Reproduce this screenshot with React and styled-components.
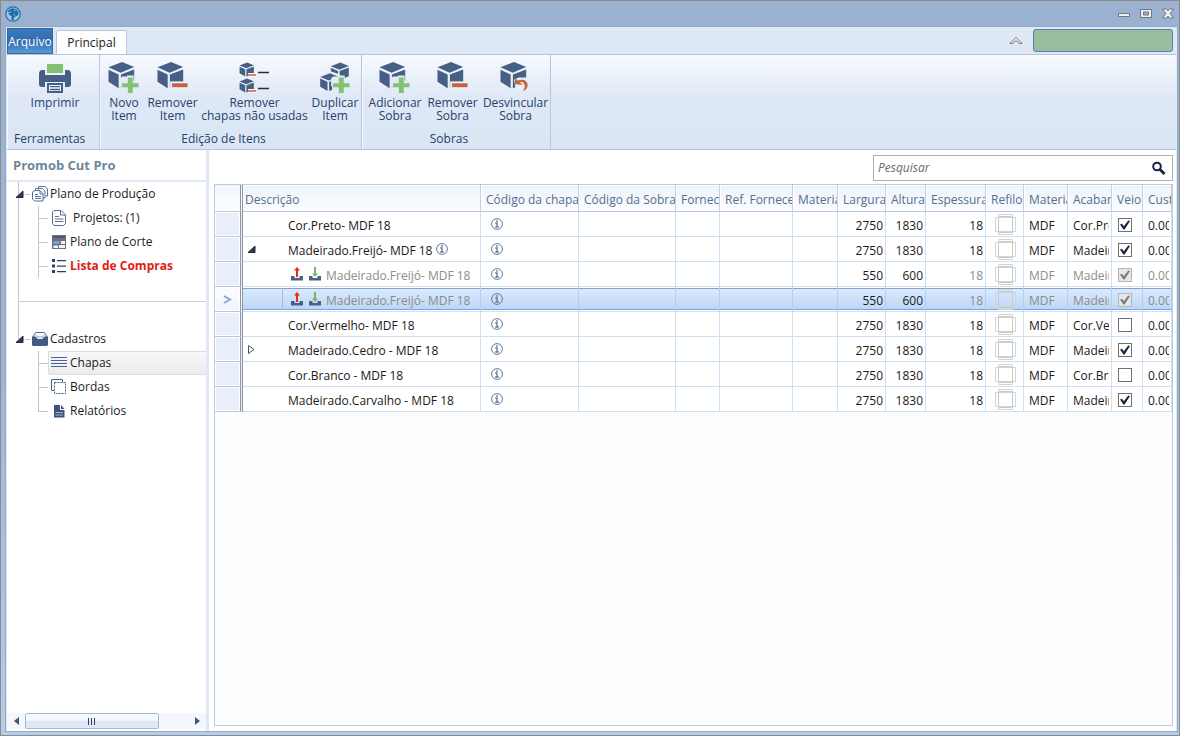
import React, { useState } from "react"
import styled, { createGlobalStyle, css } from "styled-components"

const GlobalStyle = createGlobalStyle`
* {
  box-sizing: border-box;
}
html, body, #root {
  height: 100%;
}
body {
  margin: 0;
  font-family: "Open Sans", "Noto Sans", sans-serif;
  font-size: 12px;
  line-height: 16px;
  color: #1a1a1a;
}
button, input {
  font: inherit;
  color: inherit;
}
button {
  border: 0;
  padding: 0;
  background: none;
}
ul {
  list-style: none;
  margin: 0;
  padding: 0;
}
svg {
  display: block;
  flex: none;
}
`

const Window = styled.div`
display: flex;
flex-direction: column;
height: 100vh;
border: 1px solid #8b8b8b;
padding: 0 1px 3px 4px;
background: linear-gradient(#9ab2d0, #9bb6d6 50%, #b3cdeb);
`
const TitleBar = styled.header`
display: flex;
align-items: center;
justify-content: space-between;
height: 25px;
flex: none;
`
const WindowButtons = styled.div`
display: flex;
gap: 6px;
padding-right: 2px;
`
const WindowButton = styled.button`
width: 16px;
height: 16px;
`
const Client = styled.div`
display: flex;
flex-direction: column;
flex: 1;
min-height: 0;
border: 1px solid #93a9c6;
background: #dfe8f5;
padding: 0 1px;
`

const TabBar = styled.nav`
display: flex;
align-items: flex-end;
height: 27px;
flex: none;
`
const FileTab = styled.button`
width: 46px;
height: 26px;
padding-top: 2px;
color: white;
border: 1px solid #2c68a9;
background: linear-gradient(#3d7ab8, #2f6cb0 50%, #5b9bd3);
white-space: nowrap;
display: flex;
align-items: center;
justify-content: center;
`
const Tab = styled.button`
width: 71px;
height: 24px;
margin-left: 3px;
border: 1px solid #b7c8de;
border-bottom: 0;
border-radius: 2px 2px 0 0;
background: #fdfeff;
`
const Collapse = styled.button`
margin: 0 10px 9px auto;
`
const Account = styled.button`
width: 140px;
height: 23px;
margin: 0 3px 2px 0;
border: 1px solid #4f83b4;
border-radius: 3px;
background: #99bd9d;
`

const Ribbon = styled.div`
display: flex;
height: 96px;
flex: none;
border-top: 1px solid #b4c5dc;
border-bottom: 1px solid #b4c5dc;
background: linear-gradient(#f7faff, #dfe8f6 45%, #dae6f4);
color: #27426b;
`
const Group = styled.section`
display: flex;
flex-direction: column;
justify-content: space-between;
width: ${p => p.$width}px;
padding: 6px ${p => p.$pad}px 2px;
border-right: 1px solid #b9c7dc;
box-shadow: inset 1px 0 #f5f9ff;
`
const Commands = styled.div`
display: flex;
gap: 9px;
`
const GroupName = styled.h2`
margin: 0;
padding-right: 14px;
font-size: 12px;
font-weight: 400;
text-align: ${p => p.$align || "center"};
`
const Command = styled.button`
display: flex;
flex-direction: column;
flex: none;
align-items: center;
width: ${p => p.$width}px;
line-height: 13px;
white-space: pre;
svg {
  margin-bottom: 3px;
}
`

const Body = styled.div`
display: flex;
flex: 1;
min-height: 0;
background: white;
`
const Sidebar = styled.aside`
display: flex;
flex-direction: column;
width: 202px;
flex: none;
border-right: 3px solid #dfe8f6;
`
const SidebarTitle = styled.h1`
margin: 0;
height: 32px;
flex: none;
padding: 6px;
border-bottom: 2px solid #dfe8f6;
font-size: 13px;
line-height: 18px;
color: #6f8699;
`
const Tree = styled.div`
flex: 1;
position: relative;
color: #1c1c1c;
&::before {
  content: "";
  position: absolute;
  left: 11px;
  top: 0;
  height: 157px;
  border-left: 1px solid #c6c6c6;
}
`
const Branch = styled.div`
position: relative;
`
const BranchHeader = styled.div`
display: flex;
align-items: center;
height: 24px;
padding-left: 8px;
`
const Toggle = styled.button`
width: 10px;
height: 10px;
`
const Dash = styled.span`
width: 5px;
height: 1px;
margin-right: 2px;
background: #c6c6c6;
`
const BranchLabel = styled.span`
display: flex;
align-items: center;
gap: 2px;
white-space: nowrap;
`
const Separator = styled.hr`
margin: 23px 0 25px 11px;
border: 0;
border-top: 1px solid #cfcfcf;
`
const Leaves = styled.ul`
position: relative;
margin-left: 31px;
&::before {
  content: "";
  position: absolute;
  left: 0;
  top: 0;
  bottom: ${p => p.$open ? 0 : 12}px;
  border-left: 1px solid #c6c6c6;
}
`
const Leaf = styled.li`
display: flex;
align-items: center;
height: 24px;
&::before {
  content: "";
  width: 10px;
  border-top: 1px solid #c6c6c6;
}
`
const LeafLink = styled.a`
display: flex;
align-items: center;
flex: 1;
gap: 3px;
height: 24px;
padding-left: 2px;
border: 1px solid transparent;
border-right: 0;
border-radius: 2px 0 0 2px;
color: inherit;
text-decoration: none;
white-space: pre;
${p => p.$selected && css`
  border-color: #dcdcdc;
  background: linear-gradient(#f8f8f8, #ececec);
`}
${p => p.$alert && css`
  color: #e0200f;
  font-weight: 700;
`}
`
const ScrollBar = styled.div`
display: flex;
align-items: center;
height: 16px;
flex: none;
margin-bottom: 2px;
background: #f4f8fd;
`
const ScrollArrow = styled.button`
width: 18px;
height: 16px;
display: flex;
align-items: center;
justify-content: center;
`
const ScrollThumb = styled.div`
display: flex;
align-items: center;
justify-content: center;
gap: 1px;
width: 134px;
height: 16px;
margin-right: auto;
border: 1px solid #a3b6cf;
border-radius: 2px;
background: linear-gradient(#f5f9fd 45%, #dce7f3 50%, #dfe9f5);
i {
  width: 1px;
  height: 7px;
  background: #2b3f68;
  margin-right: 1px;
}
`

const Main = styled.main`
display: flex;
flex-direction: column;
flex: 1;
min-width: 0;
padding: 5px 3px 5px 5px;
`
const Search = styled.label`
display: flex;
align-items: center;
align-self: flex-end;
width: 300px;
height: 26px;
margin-bottom: 3px;
padding: 0 6px 0 4px;
border: 1px solid #b0b0b0;
background: white;
`
const SearchInput = styled.input`
flex: 1;
min-width: 0;
padding: 0;
border: 0;
outline: 0;
font-style: italic;
&::placeholder {
  color: #6b6b6b;
  opacity: 1;
}
`
const Grid = styled.div`
flex: 1;
min-height: 0;
overflow: hidden;
border: 1px solid #bccbe0;
background: #fcfefd;
`
const Table = styled.table`
width: 100%;
table-layout: fixed;
border-collapse: separate;
border-spacing: 0;
background: white;
`
const HeadCell = styled.th`
height: 27px;
padding: 3px 0 0 ${p => p.$first ? 2 : 5}px;
border-right: 1px solid #c2d0e3;
border-bottom: 1px solid #b7c7dd;
background: linear-gradient(#eef3fb, #fbfdff);
box-shadow: inset 1px 1px white;
color: #566f8c;
font-weight: 400;
text-align: left;
white-space: nowrap;
overflow: hidden;
`
const indicator = css`
padding: 0;
border-right: 3px double #8e959e;
border-bottom: 1px solid #b7c7dd;
`
const HeadIndicator = styled.th`
height: 27px;
background: linear-gradient(#f0f5fc, white);
${indicator}
`
const Indicator = styled.td`
${indicator}
background: ${p => p.$current ? "linear-gradient(#fbfdff, #f0f5fc)" : "#e8eefa"};
box-shadow: inset 1px 1px white, inset -1px -1px white;
color: #8fa9cc;
svg {
  margin: 0 auto;
}
`
const Row = styled.tr`
color: ${p => p.$child ? "#8c8c8c" : "#1a1a1a"};
`
const Cell = styled.td`
height: 25px;
padding: 3px 2px 0 5px;
border-right: 1px solid #cfe0f5;
border-bottom: 1px solid #cfe0f5;
text-align: ${p => p.$right ? "right" : "left"};
white-space: nowrap;
overflow: hidden;
${p => p.$dark && css`
  color: #1a1a1a;
`}
${p => p.$flush && css`
  padding: 0;
`}
${p => p.$current && css`
  border-right-color: #b5cdec;
  background:
    linear-gradient(#7fa2d2, #7fa2d2) 0 1px / 100% 1px no-repeat,
    linear-gradient(#7fa2d2, #7fa2d2) 0 22px / 100% 1px no-repeat,
    linear-gradient(#dceafc, #bcd6f8) 0 1px / 100% 22px no-repeat;
`}
`
const Clip = styled.div`
overflow: hidden;
`
const Description = styled.div`
display: flex;
align-items: center;
gap: 4px;
height: 24px;
span {
  padding-top: 3px;
}
`
const Expander = styled.div`
display: flex;
align-items: center;
width: 40px;
height: 22px;
margin-right: ${p => p.$child ? 3 : 1}px;
padding-left: 4px;
border-right: 1px solid ${p => p.$current ? "#9fbbe0" : "transparent"};
`
const InfoMark = styled.div`
padding-left: 10px;
`
const Trim = styled.div`
display: flex;
justify-content: center;
padding-left: 2px;
`
const Check = styled.input`
appearance: none;
display: grid;
place-items: center;
width: 14px;
height: 14px;
margin: 0 0 1px 1px;
border: 1px solid #707070;
background: white;
&:checked::before {
  content: "";
  width: 10px;
  height: 10px;
  background: #1d2440;
  clip-path: polygon(0 45%, 20% 38%, 38% 62%, 82% 4%, 100% 10%, 46% 96%, 34% 96%);
}
&:disabled {
  border-color: #b5b5b5;
  background: #e6e6e6;
}
&:disabled::before {
  background: #7c7c7c;
}
`

const navy = "#465f85"
const green = "#83c173"
const orange = "#c5623f"

function Cube() {
  return (
    <g fill={navy}>
      <path d="M1 6.5 15 1l12.5 5.3L13.500 12z" />
      <path d="M1 9l10.500 5v14L1 21.500z" />
      <path d="M13.800 14 27.500 8.700v13.800L13.800 28z" />
    </g>
  )
}

function Plus() {
  return (
    <g transform="translate(-1 0)">
      <path d="M16 16h5v-1h7v5h5v13H15V26h-1v-8z" fill="#e2ebf7" />
      <path d="M22 17h5v6h6v4h-6v6h-5v-6h-6v-4h6z" fill={green} />
    </g>
  )
}

function CommandIcon({ name }) {
  if (name === "print") {
    return (
      <svg width="34" height="32" viewBox="0 0 34 32">
        <path d="M9 3h16v9H9z" fill={green} />
        <path d="M4 9h3v5h20V9h3c2 0 3 2 3 4v10c0 2-1 3-3 3h-3v-5H7v5H4c-2 0-3-1-3-3V13c0-2 1-4 3-4z" fill={navy} />
        <path d="M10 22.500h14V32H10z" fill="#f5f8fc" />
        <path d="M10 23h14v8H10z" fill="#f5f8fc" stroke={navy} strokeWidth="2" />
        <path d="M12 25.700h10M12 28.500h10" stroke={navy} strokeWidth="1.300" />
      </svg>
    )
  }
  if (name === "unused") {
    return (
      <svg width="34" height="32" viewBox="0 0 34 32">
        {[1, 17].map(y => (
          <g key={y} transform={`translate(1 ${y})`}>
            <g transform="scale(.54 .52)"><Cube /></g>
            <path d="M9 13h8" stroke="#f2f5fa" strokeWidth="4" />
            <path d="M9 13h8" stroke={orange} strokeWidth="1.500" />
            <path d="M19 10.500h11" stroke="#2b2d36" strokeWidth="1.500" />
          </g>
        ))}
      </svg>
    )
  }
  if (name === "duplicate") {
    return (
      <svg width="34" height="32" viewBox="0 0 34 33">
        <g transform="translate(12 1) scale(.7 .66)"><Cube /></g>
        <path d="M0 15 11 10l11 4v17H0z" fill="#e8f0fa" />
        <g transform="translate(1 12) scale(.72 .68)"><Cube /></g>
        <Plus />
      </svg>
    )
  }
  return (
    <svg width="34" height="32" viewBox="0 0 34 33">
      <Cube />
      {name === "add" && <Plus />}
      {name === "remove" && (
        <g>
          <path d="M14 21h20v9H14z" fill="#e6eef8" />
          <path d="M16 23h16v4H16z" fill={orange} />
        </g>
      )}
      {name === "unlink" && (
        <g>
          <path d="M15 19l5-2h9v14H17z" fill="#e6eef8" />
          <path d="M16 18v6l8 .500-3-2.500c3-1 5 1 5 4 0 2-1 3-2 5 3-1 5-3 5-6 0-5-5-7-10-5z" fill={orange} />
        </g>
      )}
    </svg>
  )
}

function InfoIcon() {
  return (
    <svg width="12" height="12" viewBox="0 0 12 12" fill="none" stroke="#61789a">
      <circle cx="6" cy="6" r="5.400" />
      <path d="M4.300 5H6v4M4.200 9h3.600" strokeWidth="1.300" />
      <path d="M5.200 3h1.600" strokeWidth="1.500" />
    </svg>
  )
}

function ArrowBox({ up }) {
  return (
    <svg width="14" height="14" viewBox="0 0 14 14">
      <path d="M1 9h3.500v2h5V9H13v4.500H1z" fill="#4a6184" />
      {up
        ? <path d="M7 0 4 3.500h2V10h2V3.500h2z" fill="#e0301c" />
        : <path d="M7 10 4 6.500h2V0h2v6.500h2z" fill="#77b85c" />}
    </svg>
  )
}

function TrimIcon() {
  return (
    <svg width="21" height="21" viewBox="0 0 21 21" fill="none" stroke="#d2d5d3">
      <path d="M3.500.5h14v20h-14z" />
      <path d="M.5 3.500h20v14H.5z" />
      <rect x="3.500" y="2.500" width="14" height="16" rx="1" stroke="#c6c9c7" />
    </svg>
  )
}

function ToggleIcon({ open }) {
  return (
    <svg width="9" height="9" viewBox="0 0 9 9">
      {open
        ? <path d="M8 1v6.500H1z" fill="#2a3a58" stroke="#1d2638" />
        : <path d="M1.500.5 7 4.500l-5.500 4z" fill="white" stroke="#555" />}
    </svg>
  )
}

function TreeIcon({ name }) {
  const line = { fill: "none", stroke: "#56709a" }
  return (
    <svg width="16" height="16" viewBox="0 0 16 16">
      {name === "stack" && (
        <g {...line}>
          <path d="M6.500 3.500V.5h6.500l2.500 2.500v7h-2" />
          <path d="M3.500 5.500v-3h7l2.500 2.500v7h-2" />
          <path d="M.5 13V6L3 4.500h5l3 3V15H2.500z" fill="white" />
          <path d="M8 5v3h3M3 8.500h3M3 10.500h6M3 12.500h6" />
        </g>
      )}
      {name === "project" && (
        <g {...line}>
          <path d="M3 .5h7l4.500 4.500v8.500l-2 2H3l-1.500-2V2z" />
          <path d="M9.500.5V5h5M4 6.500h4M4 9h8.500M4 11.500h8.500" />
        </g>
      )}
      {name === "cut" && (
        <g>
          <path d="M1 1h14v14H1z" fill="#6a7180" />
          <path d="M2 2h12v2H2z" fill="#3f5b88" />
          <path d="M2 5h12v1H2z" fill="#98635f" />
          <path d="M2.500 7h6v3h-6z" fill="#7e9cc8" />
          <path d="M10 7h4v3h-4zM8 11h6v3H8zM2.500 11.500H7V14H2.500z" fill="#f4f4f4" />
        </g>
      )}
      {name === "list" && (
        <g fill="#2e3f66">
          <path d="M1 1h3v3H1zM1 6.500h3v3H1zM1 12h3v3H1z" />
          <path d="M6 2h9v1.200H6zM6 7.500h9v1.200H6zM6 13h9v1.200H6z" />
        </g>
      )}
      {name === "drawer" && (
        <g>
          <path d="M1 6 3.500 1.500h9L15 6" fill="white" stroke="#56709a" />
          <path d="M0 5.500h3.500L6 8h4l2.500-2.500H16V14l-1 1H1l-1-1z" fill="#425a80" />
          <path d="M3.500 4 6 6h4l2.500-2" fill="none" stroke="#8196b5" />
        </g>
      )}
      {name === "sheets" && <path d="M0 2.500h16M0 5.500h16M0 8.500h16M0 11.500h16" stroke="#4a62a0" strokeWidth="1.200" />}
      {name === "edges" && (
        <g fill="none" stroke="#4a6190">
          <path d="M11.500 3V.5H.5v11H3" />
          <path d="M3.500 3.500h11v11h-11z" strokeDasharray="2 1" />
        </g>
      )}
      {name === "report" && (
        <g>
          <path d="M3 2h6v5h4.500v7.500H3z" fill="#3c5379" />
          <path d="M10 2l3.500 4H10z" fill="#3c5379" />
          <path d="M4.500 9.500H12M4.500 12H12" stroke="#a9b6ca" />
        </g>
      )}
    </svg>
  )
}

function TitleIcon({ name }) {
  const paint = { stroke: "#6f7681", fill: "#eef0f2" }
  return (
    <svg width="16" height="16" viewBox="0 0 16 16">
      {name === "min" && <path d="M2.500 7.500h11v3h-11z" {...paint} />}
      {name === "max" && (
        <g {...paint}>
          <path d="M2.500 3.500h11v8h-11z" />
          <path d="M5.500 6h5v3h-5z" fill="#9ab2d0" />
        </g>
      )}
      {name === "close" && <path d="M2.500 3h4L8 5l1.500-2h4L10 7.500l3.500 4.500h-4L8 10l-1.500 2h-4L6 7.500z" {...paint} />}
    </svg>
  )
}

const groups = [
  {
    name: "Ferramentas", width: 93, pad: 7, align: "left",
    commands: [{ icon: "print", label: "Imprimir", width: 82 }],
  },
  {
    name: "Edição de Itens", width: 262, pad: 8,
    commands: [
      { icon: "add", label: "Novo\nItem", width: 32 },
      { icon: "remove", label: "Remover\nItem", width: 47 },
      { icon: "unused", label: "Remover\nchapas não usadas", width: 99 },
      { icon: "duplicate", label: "Duplicar\nItem", width: 44 },
    ],
  },
  {
    name: "Sobras", width: 189, pad: 8,
    commands: [
      { icon: "add", label: "Adicionar\nSobra", width: 50 },
      { icon: "remove", label: "Remover\nSobra", width: 47 },
      { icon: "unlink", label: "Desvincular\nSobra", width: 61 },
    ],
  },
]

const columns = [
  { label: "Descrição" },
  { label: "Código da chapa", width: 98 },
  { label: "Código da Sobra", width: 97 },
  { label: "Fornec", width: 44 },
  { label: "Ref. Fornece", width: 73 },
  { label: "Materia", width: 45 },
  { label: "Largura", width: 48 },
  { label: "Altura", width: 40 },
  { label: "Espessura", width: 60 },
  { label: "Refilo", width: 38 },
  { label: "Materia", width: 44 },
  { label: "Acabar", width: 44 },
  { label: "Veio", width: 31 },
  { label: "Cust", width: 29 },
]

const sheets = [
  { name: "Cor.Preto- MDF 18", finish: "Cor.Preto", grain: true },
  { name: "Madeirado.Freijó- MDF 18", finish: "Madeirado", grain: true, toggle: "open", info: true },
  { name: "Madeirado.Freijó- MDF 18", finish: "Madeirado", grain: true, child: true },
  { name: "Madeirado.Freijó- MDF 18", finish: "Madeirado", grain: true, child: true, current: true },
  { name: "Cor.Vermelho- MDF 18", finish: "Cor.Vermelho", grain: false },
  { name: "Madeirado.Cedro - MDF 18", finish: "Madeirado", grain: true, toggle: "closed" },
  { name: "Cor.Branco - MDF 18", finish: "Cor.Branco", grain: false },
  { name: "Madeirado.Carvalho - MDF 18", finish: "Madeirado", grain: true },
]

function SheetRow({ sheet }) {
  const [grain, setGrain] = useState(sheet.grain)
  const { child, current, toggle } = sheet
  return (
    <Row $child={child}>
      <Indicator $current={current}>
        {current && (
          <svg width="9" height="9" viewBox="0 0 9 9" fill="none" stroke="currentColor" strokeWidth="2">
            <path d="M1 1l6 3.500L1 8" />
          </svg>
        )}
      </Indicator>
      <Cell $current={current} $flush>
        <Description>
          <Expander $current={current} $child={child}>
            {toggle && <Toggle aria-label="Expandir"><ToggleIcon open={toggle === "open"} /></Toggle>}
          </Expander>
          {child && <ArrowBox up />}
          {child && <ArrowBox />}
          <span>{sheet.name}</span>
          {sheet.info && <InfoIcon />}
        </Description>
      </Cell>
      <Cell $current={current} $flush><InfoMark><InfoIcon /></InfoMark></Cell>
      <Cell $current={current} />
      <Cell $current={current} />
      <Cell $current={current} />
      <Cell $current={current} />
      <Cell $current={current} $right $dark>{child ? 550 : 2750}</Cell>
      <Cell $current={current} $right $dark>{child ? 600 : 1830}</Cell>
      <Cell $current={current} $right>18</Cell>
      <Cell $current={current} $flush><Trim><TrimIcon /></Trim></Cell>
      <Cell $current={current}>MDF</Cell>
      <Cell $current={current}><Clip>{sheet.finish}</Clip></Cell>
      <Cell $current={current}>
        <Check
          type="checkbox"
          aria-label="Veio"
          checked={grain}
          disabled={child}
          onChange={e => setGrain(e.target.checked)}
        />
      </Cell>
      <Cell $current={current}><Clip>0.00</Clip></Cell>
    </Row>
  )
}

export default function App() {
  return (
    <Window>
      <GlobalStyle />
      <TitleBar>
        <svg width="16" height="16" viewBox="0 0 16 16">
          <circle cx="8" cy="8" r="7.200" fill="#a9c6e0" stroke="#1f6ea8" strokeWidth="1.300" />
          <path d="M3 5c1.500-2 4-3 6-2.500 3 .5 4.500 2.500 4.500 5-.5 2-1.500 3-3 3L9 11.500l-.5 3-2-1V10L4 9z" fill="#1f6ea8" />
          <path d="M9 4.500h1.500M8.500 8 10 9.500M3.500 6.500 6 6" stroke="#a9c6e0" />
        </svg>
        <WindowButtons>
          <WindowButton aria-label="Minimizar"><TitleIcon name="min" /></WindowButton>
          <WindowButton aria-label="Maximizar"><TitleIcon name="max" /></WindowButton>
          <WindowButton aria-label="Fechar"><TitleIcon name="close" /></WindowButton>
        </WindowButtons>
      </TitleBar>
      <Client>
        <TabBar>
          <FileTab>Arquivo</FileTab>
          <Tab>Principal</Tab>
          <Collapse aria-label="Recolher">
            <svg width="14" height="9" viewBox="0 0 14 9" fill="#f4f4f4" stroke="#6f7681">
              <path d="M1 7.500 7 1.500l6 6h-2.500L7 4.500l-3.500 3z" />
            </svg>
          </Collapse>
          <Account aria-label="Conta" />
        </TabBar>
        <Ribbon>
          {groups.map(group => (
            <Group key={group.name} $width={group.width} $pad={group.pad}>
              <Commands>
                {group.commands.map(c => (
                  <Command key={c.label} $width={c.width}>
                    <CommandIcon name={c.icon} />
                    {c.label}
                  </Command>
                ))}
              </Commands>
              <GroupName $align={group.align}>{group.name}</GroupName>
            </Group>
          ))}
        </Ribbon>
        <Body>
          <Sidebar>
            <SidebarTitle>Promob Cut Pro</SidebarTitle>
            <Tree>
              <Branch>
                <BranchHeader>
                  <Toggle aria-label="Recolher"><ToggleIcon open /></Toggle>
                  <Dash />
                  <BranchLabel><TreeIcon name="stack" />Plano de Produção</BranchLabel>
                </BranchHeader>
                <Leaves $open>
                  <Leaf><LeafLink href="#projetos"><TreeIcon name="project" />{" Projetos: (1)"}</LeafLink></Leaf>
                  <Leaf><LeafLink href="#corte"><TreeIcon name="cut" />Plano de Corte</LeafLink></Leaf>
                  <Leaf><LeafLink href="#compras" $alert><TreeIcon name="list" />Lista de Compras</LeafLink></Leaf>
                </Leaves>
              </Branch>
              <Separator />
              <Branch>
                <BranchHeader>
                  <Toggle aria-label="Recolher"><ToggleIcon open /></Toggle>
                  <Dash />
                  <BranchLabel><TreeIcon name="drawer" />Cadastros</BranchLabel>
                </BranchHeader>
                <Leaves>
                  <Leaf><LeafLink href="#chapas" $selected><TreeIcon name="sheets" />Chapas</LeafLink></Leaf>
                  <Leaf><LeafLink href="#bordas"><TreeIcon name="edges" />Bordas</LeafLink></Leaf>
                  <Leaf><LeafLink href="#relatorios"><TreeIcon name="report" />Relatórios</LeafLink></Leaf>
                </Leaves>
              </Branch>
            </Tree>
            <ScrollBar>
              <ScrollArrow aria-label="Esquerda">
                <svg width="5" height="8" viewBox="0 0 5 8"><path d="M5 0v8L0 4z" fill="#3f5680" /></svg>
              </ScrollArrow>
              <ScrollThumb><i /><i /><i /></ScrollThumb>
              <ScrollArrow aria-label="Direita">
                <svg width="5" height="8" viewBox="0 0 5 8"><path d="M0 0v8l5-4z" fill="#3f5680" /></svg>
              </ScrollArrow>
            </ScrollBar>
          </Sidebar>
          <Main>
            <Search>
              <SearchInput placeholder="Pesquisar" aria-label="Pesquisar" />
              <svg width="15" height="15" viewBox="0 0 15 15" fill="none" stroke="#1c2340">
                <circle cx="6" cy="5.500" r="3.800" strokeWidth="2" />
                <path d="M9 8.500l4.500 4.500" strokeWidth="2.800" />
              </svg>
            </Search>
            <Grid>
              <Table>
                <colgroup>
                  <col width="28" />
                  {columns.map((c, i) => <col key={i} width={c.width} />)}
                </colgroup>
                <thead>
                  <tr>
                    <HeadIndicator />
                    {columns.map((c, i) => (
                      <HeadCell key={i} $first={i === 0}><Clip>{c.label}</Clip></HeadCell>
                    ))}
                  </tr>
                </thead>
                <tbody>
                  {sheets.map((sheet, i) => <SheetRow key={i} sheet={sheet} />)}
                </tbody>
              </Table>
            </Grid>
          </Main>
        </Body>
      </Client>
    </Window>
  )
}
